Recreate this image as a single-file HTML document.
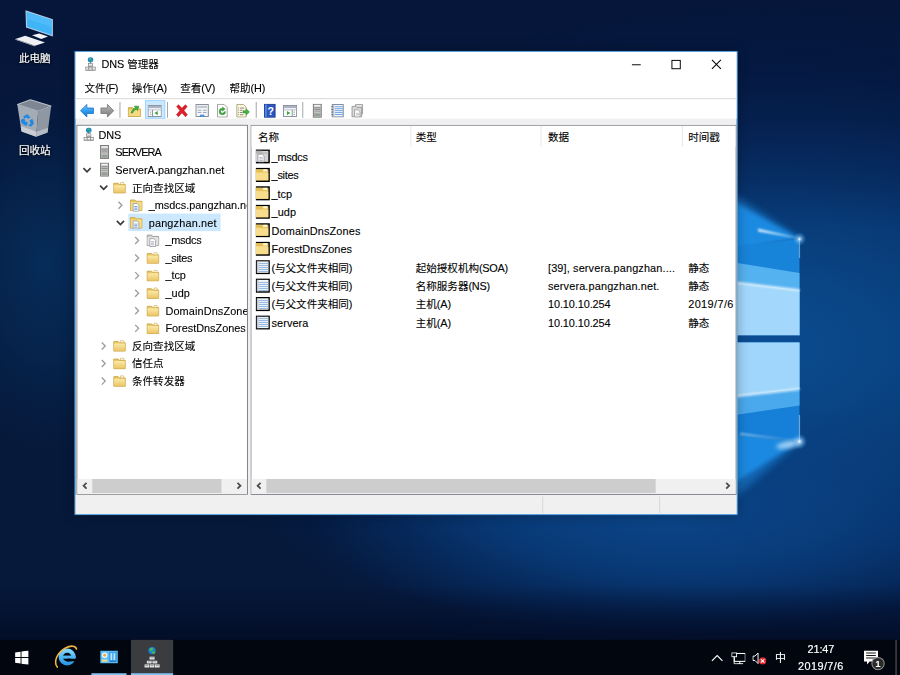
<!DOCTYPE html>
<html lang="zh-CN">
<head>
<meta charset="utf-8">
<title>DNS 管理器</title>
<style>
*{box-sizing:border-box;margin:0;padding:0}
html,body{width:900px;height:675px;overflow:hidden;background:#04183a}
body{font-family:"Liberation Sans","Noto Sans CJK SC",sans-serif;font-size:12px;color:#000;position:relative}
.l{font-size:12.4px}
#wall{position:absolute;left:0;top:0;width:900px;height:675px;display:block}
/* UI is laid out in the original 1024x768 space and scaled to 900x675 */
#stage{position:absolute;left:0;top:0;width:1024px;height:768px;transform:scale(0.87890625);transform-origin:0 0}
.abs{position:absolute;display:block}
.dicon{-webkit-text-stroke:.2px #fff;position:absolute;width:77px;text-align:center;color:#fff;font-size:12px;line-height:14px;text-shadow:0 1px 2px rgba(0,0,0,.9),0 0 3px rgba(0,0,0,.7)}
#win{-webkit-text-stroke:.12px #000;position:absolute;left:85px;top:58px;width:753.500px;height:528px;background:#f0f0f0;border:1px solid #1a82d8;box-shadow:0 0 14px rgba(0,0,0,.35)}
#title{position:absolute;left:0;top:0;width:752px;height:30px;background:#fff}
#title .txt{position:absolute;left:29.500px;top:6px;font-size:12px;line-height:16px;white-space:nowrap}
#menu{position:absolute;left:0;top:30px;width:752px;height:24.500px;background:#fff}
#menu>i{position:absolute;left:0;top:22.800px;width:752px;height:1.700px;background:#c4c4c4}
#menu>span{position:absolute;top:3.500px;line-height:16px;white-space:nowrap}
#tool{position:absolute;left:0;top:54px;width:752px;height:21.500px;background:#fff}
#tool .sep{position:absolute;top:3px;width:1px;height:18px;background:#9a9a9a}
#tool .hot{position:absolute;top:1px;width:23px;height:21px;background:#cce8ff;border:1px solid #99d1ff}
.pane{position:absolute;background:#fff;border:1px solid #6f747c;overflow:hidden}
#tree{left:1px;top:83px;width:195px;height:421px}
#list{left:199px;top:83px;width:553px;height:421px}
#tree .lb{position:absolute;line-height:20px;white-space:nowrap}
#tree .sel{position:absolute;background:#cce8ff}
.hdr{position:absolute;left:0;top:0;width:551px;height:24px;background:#fff}
.hdr>span{position:absolute;top:4.700px;line-height:16px;white-space:nowrap}
.hdr i{position:absolute;top:0;width:1px;height:24px;background:#e5e5e5}
.lrow{position:absolute;left:0;width:551px;height:21px;line-height:21px;white-space:nowrap}
.lrow>span{position:absolute;top:0;white-space:nowrap}
.sb{position:absolute;height:17px;background:#f0f0f0}
.sb .th{position:absolute;top:0;height:15.500px;background:#cdcdcd}
#status{position:absolute;left:0;top:504px;width:752px;height:22px;background:#f0f0f0}
#status i{position:absolute;top:2px;width:1px;height:19px;background:#d4d4d4}
#task{position:absolute;left:0;top:728px;width:1024px;height:40px;background:#02070f}
#task .act{position:absolute;top:0;width:48px;height:40px;background:#3a3c40}
#task .ul{position:absolute;top:38px;height:2px;background:#84c4f2}
#task .tx{-webkit-text-stroke:.2px #fff;position:absolute;color:#fff;font-size:12px;line-height:14px;white-space:nowrap;text-align:center}
#task .sd{position:absolute;left:1019px;top:0;width:1px;height:40px;background:#6e6e6e}
</style>
</head>
<body>
<svg id="wall" viewBox="0 0 900 675">
<defs>
<linearGradient id="fg" x1="0" y1="0" x2="0" y2="1"><stop offset="0" stop-color="#fbeaa8"/><stop offset="1" stop-color="#ecc566"/></linearGradient>
<linearGradient id="gb" x1="0" y1="0" x2="0" y2="1"><stop offset="0" stop-color="#7fd0ff"/><stop offset=".5" stop-color="#2f9df0"/><stop offset="1" stop-color="#1572d0"/></linearGradient>
<linearGradient id="gf" x1="0" y1="0" x2="0" y2="1"><stop offset="0" stop-color="#c4c4c4"/><stop offset=".5" stop-color="#999"/><stop offset="1" stop-color="#7c7c7c"/></linearGradient>
<linearGradient id="ieg" x1="0" y1="0" x2="0" y2="1"><stop offset="0" stop-color="#7dd3fc"/><stop offset="1" stop-color="#2a9bea"/></linearGradient>
<radialGradient id="bg" cx="0" cy="0" r="1" gradientUnits="userSpaceOnUse" gradientTransform="translate(765 345) scale(600 345)">
<stop offset="0" stop-color="#0a4b8e"/><stop offset=".2" stop-color="#0a4585"/><stop offset=".4" stop-color="#083a76"/><stop offset=".6" stop-color="#062c62"/><stop offset=".8" stop-color="#041d47"/><stop offset="1" stop-color="#06193b"/>
</radialGradient>
<radialGradient id="glow3" cx="0" cy="0" r="1" gradientUnits="userSpaceOnUse" gradientTransform="translate(45 265) scale(110 190)">
<stop offset="0" stop-color="#06305f" stop-opacity=".85"/><stop offset=".5" stop-color="#062a56" stop-opacity=".6"/><stop offset="1" stop-color="#05224a" stop-opacity="0"/>
</radialGradient>
<radialGradient id="glow2" cx="0" cy="0" r="1" gradientUnits="userSpaceOnUse" gradientTransform="translate(670 515) scale(360 120)">
<stop offset="0" stop-color="#0b468a" stop-opacity=".95"/><stop offset=".45" stop-color="#0a4284" stop-opacity=".7"/><stop offset="1" stop-color="#0a3f80" stop-opacity="0"/>
</radialGradient>
<linearGradient id="dkt" x1="0" y1="0" x2="0" y2="1"><stop offset="0" stop-color="#05143a" stop-opacity=".55"/><stop offset=".5" stop-color="#05143a" stop-opacity=".4"/><stop offset="1" stop-color="#05143a" stop-opacity="0"/></linearGradient>
<linearGradient id="dk" x1="0" y1="0" x2="0" y2="1"><stop offset="0" stop-color="#020a22" stop-opacity="0"/><stop offset=".35" stop-color="#020a22" stop-opacity=".45"/><stop offset=".61" stop-color="#020a22" stop-opacity=".8"/><stop offset="1" stop-color="#020a22" stop-opacity=".8"/></linearGradient>
<linearGradient id="fanU" x1="0" y1="1" x2="0" y2="0"><stop offset="0" stop-color="#1a8ae2"/><stop offset=".55" stop-color="#157bd2" stop-opacity=".9"/><stop offset="1" stop-color="#0e5eb0" stop-opacity="0"/></linearGradient>
<linearGradient id="fanD" x1="0" y1="0" x2="0" y2="1"><stop offset="0" stop-color="#1a8ae2"/><stop offset=".5" stop-color="#157bd2" stop-opacity=".85"/><stop offset="1" stop-color="#0e5eb0" stop-opacity="0"/></linearGradient>
<radialGradient id="flare"><stop offset="0" stop-color="#fff" stop-opacity=".95"/><stop offset=".35" stop-color="#9fd6ff" stop-opacity=".5"/><stop offset="1" stop-color="#3aa0f0" stop-opacity="0"/></radialGradient>
<filter id="bl" x="-20%" y="-20%" width="140%" height="140%"><feGaussianBlur stdDeviation="1.2"/></filter>
<filter id="bl3" x="-30%" y="-30%" width="160%" height="160%"><feGaussianBlur stdDeviation="2"/></filter>
<filter id="bl4" x="-30%" y="-30%" width="160%" height="160%"><feGaussianBlur stdDeviation="3.5"/></filter>
</defs>
<rect width="900" height="675" fill="url(#bg)"/>
<rect width="900" height="675" fill="url(#glow2)"/>
<rect width="200" height="675" fill="url(#glow3)"/>
<rect y="585" width="900" height="90" fill="url(#dk)"/>
<rect width="900" height="230" fill="url(#dkt)"/>
<!-- light fans above / below the window-logo panes -->
<path d="M801 239L718 184V254z" fill="#1a88df" opacity=".55" filter="url(#bl4)"/>
<path d="M800 239L720 194V252z" fill="#1c8ce4" opacity=".95" filter="url(#bl3)"/>
<path d="M801 441L718 428V512z" fill="#1a88df" opacity=".5" filter="url(#bl4)"/>
<path d="M800 441L720 430V492z" fill="#1c8ce4" opacity=".95" filter="url(#bl3)"/>
<!-- upper pane -->
<path d="M725 248.500L799.500 239V335.500H725z" fill="#1784da"/>
<path d="M725 261L799.500 273V335.500H725z" fill="#55b2f0"/>
<path d="M725 281L799.500 290V335.500H725z" fill="#a3d8fc"/>
<path d="M725 280.300L799.500 289.300V291L725 282z" fill="#eaf6ff" filter="url(#bl)"/>
<!-- gap -->
<rect x="725" y="335.500" width="74.500" height="7" fill="#0c4c92"/>
<!-- lower pane -->
<path d="M725 342.500H799.500V441L725 432z" fill="#1680d8"/>
<path d="M725 342.500H799.500V405.500L725 416.500z" fill="#4aa9ec"/>
<path d="M725 342.500H799.500V389L725 397.500z" fill="#a0d6fb"/>
<path d="M725 396.700L799.500 388.200V390L725 398.500z" fill="#eef8ff" filter="url(#bl)"/>
<!-- edge streaks + flares -->
<path d="M799.500 238V258" stroke="#cfeaff" stroke-width="1.200" opacity=".45"/>
<path d="M799.500 415V442" stroke="#cfeaff" stroke-width="1.200" opacity=".5"/>
<path d="M800 238.500L758 228.500 758 231.500z" fill="#d9efff" opacity=".95" filter="url(#bl)"/>
<path d="M800 441.500L740 433 740 434.500z" fill="#d9efff" opacity=".8" filter="url(#bl)"/>
<ellipse cx="789" cy="444.500" rx="13" ry="3.500" fill="#d8eeff" opacity=".7" filter="url(#bl3)" transform="rotate(-12 789 444.500)"/>
<circle cx="799.500" cy="239" r="7" fill="url(#flare)"/>
<circle cx="799.500" cy="441.500" r="8" fill="url(#flare)"/>
<g><path d="M25.500 10.200L52.900 19.200V36.500L26 27.600z" fill="#b9cfe6"/><path d="M26.600 11.800L51.900 20.100V35L27 26.800z" fill="#3fb4f6"/><path d="M26.600 11.800L51.900 20.100V27L26.800 19z" fill="#5cc3fb" opacity=".55"/><path d="M32 35.200L39.200 33.600 48 36.400 41.300 38.900z" fill="#f2f4f7"/><path d="M15.400 38.900L25.200 35.700 45 42.500 35 45.700z" fill="#eef0f4"/><path d="M15.400 38.900L35 45.700v.900L15.400 39.800z" fill="#b8bec8"/></g><g><path d="M17.300 104.500L30.400 99.700 51.200 106.100 38.200 111.300z" fill="#7d8793" stroke="#c9d0d8" stroke-width=".9"/><path d="M17.300 104.500L38.200 111.300 36.200 136.700 21.500 131.600z" fill="#a3abb5"/><path d="M38.200 111.300L51.200 106.100 47.600 132.500 36.200 136.700z" fill="#8e97a2"/><path d="M20.700 126L36.600 131.700 36.200 136.700 21.500 131.600z" fill="#d3d7dc" opacity=".8"/><path d="M36.600 131.700L48.200 127.700 47.600 132.500 36.200 136.700z" fill="#c0c5cc" opacity=".8"/><g fill="#1e88e5"><path d="M23.300 116.200l4-1.900 3.200 3.300-2.900 1.100-1.200-1.500-2 1.600z"/><path d="M32.300 118.700l1.700 4.600-2.700 3.200-3.600-1 2.900-1.800-1-3.300z"/><path d="M21.400 119.500l2.800-.900 1.300 3.200 2.500 1-1.700 3.200-3.700-1.900-2-3z"/></g></g>
</svg>

<div id="stage">
<div class="dicon" style="left:1px;top:59.500px">此电脑</div>
<div class="dicon" style="left:1px;top:163.500px">回收站</div>
<div id="win"><div id="title"><svg class="abs" style="left:9px;top:6.3px;" width="16" height="16" viewBox="0 0 16 16"><circle cx="8" cy="3.100" r="3.150" fill="#1f86cc"/><path d="M6.400 1.500q1.500-.900 2.500.200l-.600 1.200-1.400.400zM8.200 3.800l1.500-.300.400 1.100-1.300.900z" fill="#52c24c"/><rect x="7.500" y="5.600" width="1" height="1.800" fill="#777"/><rect x="5.600" y="7.200" width="4.800" height="3.300" fill="#f6f6f6" stroke="#808080" stroke-width=".8"/><path d="M6.500 9.300h3" stroke="#999" stroke-width=".7"/><rect x="2.600" y="11.300" width="3.500" height="3.700" fill="#f6f6f6" stroke="#808080" stroke-width=".8"/><rect x="6.250" y="11.300" width="3.500" height="3.700" fill="#f6f6f6" stroke="#808080" stroke-width=".8"/><rect x="9.900" y="11.300" width="3.500" height="3.700" fill="#f6f6f6" stroke="#808080" stroke-width=".8"/><path d="M3.300 13.800h2.100M6.950 13.800h2.100M10.600 13.800h2.100" stroke="#999" stroke-width=".7"/></svg><span class="txt"><span class="l" style="letter-spacing:-0.117px">DNS </span>管理器</span><svg class="abs" style="left:614px;top:0" width="138" height="30" viewBox="0 0 138 30"><path d="M19 14.700h10" stroke="#000" stroke-width="1.100"/><rect x="64.500" y="9.700" width="9.500" height="9.500" fill="none" stroke="#000" stroke-width="1.100"/><path d="M110 9.200l10.200 10.200M120.200 9.200l-10.200 10.200" stroke="#000" stroke-width="1.150"/></svg></div><div id="menu"><span style="left:10px">文件<span class="l" style="letter-spacing:-0.572px">(F)</span></span><span style="left:64px">操作<span class="l" style="letter-spacing:-0.127px">(A)</span></span><span style="left:119px">查看<span class="l" style="letter-spacing:-0.221px">(V)</span></span><span style="left:175px">帮助<span class="l" style="letter-spacing:-0.075px">(H)</span></span><i></i></div><div id="tool"><div class="hot" style="left:79px"></div><svg class="abs" style="left:5px;top:4.5px;" width="16" height="16" viewBox="0 0 16 16"><path d="M.600 8l7.200-7.200v4.100h7.500v6.200h-7.500v4.100z" fill="url(#gb)" stroke="#1a6dc4" stroke-width=".9" stroke-linejoin="round"/></svg><svg class="abs" style="left:28px;top:4.5px;" width="16" height="16" viewBox="0 0 16 16"><path d="M15.400 8l-7.200-7.200v4.100h-7.500v6.200h7.500v4.100z" fill="url(#gf)" stroke="#707070" stroke-width=".9" stroke-linejoin="round"/></svg><svg class="abs" style="left:59px;top:4.5px;" width="16" height="16" viewBox="0 0 16 16"><path d="M1 4.500h5l1.300 1.500h7.700v8.500h-14z" fill="#e8c560" stroke="#c59d3a" stroke-width=".9"/><path d="M1.500 7h13v7h-13z" fill="#f6da83"/><path d="M4 10.500c1-3 2.500-5 5-6l-1.300-1.800 5.300.300-1.500 5-1.200-1.700c-2 .700-3.300 2-4.300 4.200z" fill="#3fae3a" stroke="#2a7f27" stroke-width=".5"/></svg><svg class="abs" style="left:82px;top:4.5px;" width="16" height="16" viewBox="0 0 16 16"><rect x=".500" y="2" width="15" height="12.500" fill="#fff" stroke="#7b8794" stroke-width="1"/><rect x="1" y="2.500" width="14" height="2.600" fill="#a9b4c0"/><path d="M1 7h14" stroke="#9aa5b0" stroke-width=".8"/><path d="M5.500 7v7.500" stroke="#7b8794" stroke-width="1"/><path d="M11.500 8.200v5l-3.800-2.500z" fill="#3aa83a"/><rect x="2.500" y="9" width="1.500" height="1.200" fill="#8c97a2"/><rect x="2.500" y="11.500" width="1.500" height="1.200" fill="#8c97a2"/></svg><svg class="abs" style="left:113px;top:4.5px;" width="16" height="16" viewBox="0 0 16 16"><path d="M2 3.200l2.200-2 3.800 4 3.800-4 2.200 2-3.700 4.600 3.900 4.800-2.300 2.100-3.900-4.300-3.900 4.300-2.300-2.100 3.900-4.800z" fill="#e0202a" stroke="#b0121b" stroke-width=".6"/></svg><svg class="abs" style="left:136px;top:4.5px;" width="16" height="16" viewBox="0 0 16 16"><rect x="1" y="1" width="14" height="13.500" fill="#f4f4f4" stroke="#76808c" stroke-width="1"/><rect x="2.500" y="2.500" width="11" height="2.500" fill="#c3cad3"/><path d="M3 7.500h4M9 7.500h4M3 10h4M9 10h4" stroke="#8fa2b8" stroke-width="1"/><rect x="5.500" y="12.500" width="5" height="2.500" fill="#4a8fdd"/></svg><svg class="abs" style="left:159px;top:4.5px;" width="16" height="16" viewBox="0 0 16 16"><path d="M2.500 .800h7.500l3.500 3.500v10.900h-11z" fill="#fff" stroke="#8a8a8a" stroke-width=".9"/><path d="M8 5.200a3.700 3.700 0 1 0 3.700 3.900h-1.800a1.900 1.900 0 1 1-1.900-2.100v1.600l3.300-2.500-3.300-2.500z" fill="#3aa83a" stroke="#2a7f27" stroke-width=".4"/></svg><svg class="abs" style="left:182px;top:4.5px;" width="16" height="16" viewBox="0 0 16 16"><path d="M1.500 .800h7.500l3 3v11.400h-10.500z" fill="#fffbe0" stroke="#9a8f6a" stroke-width=".9"/><path d="M3 5h1M5 5h5M3 7.500h1M5 7.500h3M3 10h1M5 10h3M3 12.500h1M5 12.500h4" stroke="#7a7a7a" stroke-width="1"/><path d="M8.500 8h3.500v-2.300l4 3.600-4 3.600v-2.300h-3.500z" fill="#43b23f" stroke="#2a7f27" stroke-width=".5"/></svg><svg class="abs" style="left:213px;top:4.5px;" width="16" height="16" viewBox="0 0 16 16"><rect x="2" y=".500" width="12" height="15" fill="#2a56c0" stroke="#1a3a94" stroke-width="1"/><rect x="2.500" y="1" width="2" height="14" fill="#5b86e0"/><text x="9" y="12.500" font-family="Liberation Sans,sans-serif" font-weight="bold" font-size="12" fill="#fff" text-anchor="middle">?</text></svg><svg class="abs" style="left:236px;top:4.5px;" width="16" height="16" viewBox="0 0 16 16"><rect x=".500" y="2" width="15" height="12.500" fill="#fff" stroke="#7b8794" stroke-width="1"/><rect x="1" y="2.500" width="14" height="2.600" fill="#a9b4c0"/><path d="M1 7h14" stroke="#9aa5b0" stroke-width=".8"/><path d="M10.500 7v7.500" stroke="#7b8794" stroke-width="1"/><path d="M4.500 8.200v5l3.800-2.500z" fill="#3aa83a"/><rect x="12" y="9" width="1.500" height="1.200" fill="#8c97a2"/><rect x="12" y="11.500" width="1.500" height="1.200" fill="#8c97a2"/></svg><svg class="abs" style="left:267px;top:4.5px;" width="16" height="16" viewBox="0 0 16 16"><rect x="3.5" y=".5" width="9" height="15" fill="#c9c9c9" stroke="#6e6e6e"/><rect x="4.5" y="1.5" width="7" height="1.6" fill="#f2f2f2"/><rect x="4.5" y="4" width="7" height="1.3" fill="#8c8c8c"/><rect x="4.5" y="6.2" width="7" height="1.3" fill="#8c8c8c"/><rect x="4.5" y="8.4" width="7" height="1.3" fill="#a8a8a8"/><rect x="4.5" y="11" width="7" height="3.5" fill="#9a9a9a"/><rect x="9" y="12" width="1.6" height="1.2" fill="#5fd25f"/></svg><svg class="abs" style="left:290px;top:4.5px;" width="16" height="16" viewBox="0 0 16 16"><rect x="2" y="1" width="12.500" height="14" fill="#f5f9ff" stroke="#6f7d90" stroke-width="1"/><rect x="2.500" y="1.500" width="2" height="13" fill="#c3c9d3"/><path d="M5 3.500h9M5 5.700h9M5 7.900h9M5 10.100h9M5 12.300h9" stroke="#6ea0dd" stroke-width="1.100"/><path d="M.800 3.500h2.500M.800 6.500h2.500M.800 9.500h2.500M.800 12.500h2.500" stroke="#555" stroke-width=".8"/></svg><svg class="abs" style="left:313px;top:4.5px;" width="16" height="16" viewBox="0 0 16 16"><path d="M5.500 1h8v10.500h-8z" fill="#e3e3e3" stroke="#8e8e8e" stroke-width=".9"/><path d="M1.500 3h4.500l1.200 1.300h5.300v10.700h-11z" fill="#d7d7d7" stroke="#8e8e8e" stroke-width=".9"/><path d="M4.500 7h4l2 2v6h-6z" fill="#fff" stroke="#8c8c8c" stroke-width=".8"/><path d="M6 11.500q1.500-1.500 3 0t-3 1.500" fill="none" stroke="#a0a0a0" stroke-width=".8"/></svg><i class="sep" style="left:50px"></i><i class="sep" style="left:104px"></i><i class="sep" style="left:205px"></i><i class="sep" style="left:258px"></i></div><div class="pane" id="tree"><svg class="abs" style="left:4.5px;top:2px;" width="16" height="16" viewBox="0 0 16 16"><circle cx="8" cy="3.100" r="3.150" fill="#1f86cc"/><path d="M6.400 1.500q1.500-.900 2.500.200l-.600 1.200-1.400.400zM8.200 3.800l1.500-.300.400 1.100-1.300.900z" fill="#52c24c"/><rect x="7.500" y="5.600" width="1" height="1.800" fill="#777"/><rect x="5.600" y="7.200" width="4.800" height="3.300" fill="#f6f6f6" stroke="#808080" stroke-width=".8"/><path d="M6.500 9.300h3" stroke="#999" stroke-width=".7"/><rect x="2.600" y="11.300" width="3.500" height="3.700" fill="#f6f6f6" stroke="#808080" stroke-width=".8"/><rect x="6.250" y="11.300" width="3.500" height="3.700" fill="#f6f6f6" stroke="#808080" stroke-width=".8"/><rect x="9.900" y="11.300" width="3.500" height="3.700" fill="#f6f6f6" stroke="#808080" stroke-width=".8"/><path d="M3.300 13.800h2.100M6.950 13.800h2.100M10.600 13.800h2.100" stroke="#999" stroke-width=".7"/></svg><span class="lb" style="left:24.2px;top:1px"><span class="l" style="letter-spacing:-0.189px">DNS</span></span><svg class="abs" style="left:23px;top:22px;" width="16" height="16" viewBox="0 0 16 16"><rect x="3.5" y=".5" width="9" height="15" fill="#c9c9c9" stroke="#6e6e6e"/><rect x="4.5" y="1.5" width="7" height="1.6" fill="#f2f2f2"/><rect x="4.5" y="4" width="7" height="1.3" fill="#8c8c8c"/><rect x="4.5" y="6.2" width="7" height="1.3" fill="#8c8c8c"/><rect x="4.5" y="8.4" width="7" height="1.3" fill="#a8a8a8"/><rect x="4.5" y="11" width="7" height="3.5" fill="#9a9a9a"/><rect x="9" y="12" width="1.6" height="1.2" fill="#5fd25f"/></svg><span class="lb" style="left:43.2px;top:21px"><span class="l" style="letter-spacing:-1.026px">SERVERA</span></span><svg class="abs" style="left:3px;top:42px;" width="16" height="16" viewBox="0 0 16 16"><path d="M3.900 6.300l4.100 4.100 4.100-4.100" fill="none" stroke="#3a3a3a" stroke-width="1.900"/></svg><svg class="abs" style="left:23px;top:42px;" width="16" height="16" viewBox="0 0 16 16"><rect x="3.5" y=".5" width="9" height="15" fill="#c9c9c9" stroke="#6e6e6e"/><rect x="4.5" y="1.5" width="7" height="1.6" fill="#f2f2f2"/><rect x="4.5" y="4" width="7" height="1.3" fill="#8c8c8c"/><rect x="4.5" y="6.2" width="7" height="1.3" fill="#8c8c8c"/><rect x="4.5" y="8.4" width="7" height="1.3" fill="#a8a8a8"/><rect x="4.5" y="11" width="7" height="3.5" fill="#9a9a9a"/><rect x="9" y="12" width="1.6" height="1.2" fill="#5fd25f"/></svg><span class="lb" style="left:43.2px;top:41px"><span class="l" style="letter-spacing:0.039px">ServerA.pangzhan.net</span></span><svg class="abs" style="left:22px;top:62px;" width="16" height="16" viewBox="0 0 16 16"><path d="M3.900 6.300l4.100 4.100 4.100-4.100" fill="none" stroke="#3a3a3a" stroke-width="1.900"/></svg><svg class="abs" style="left:40px;top:62px;" width="16" height="16" viewBox="0 0 16 16"><path d="M1.500 3.500h5l1.300 1.500h6.700v9.500h-13z" fill="#e9c763" stroke="#c9a13c" stroke-width=".9"/><path d="M1.900 5.800h12.200v8.300h-12.200z" fill="url(#fg)"/><path d="M9.200 2.600h3.600v2.400h-3.600z" fill="#fffbe8" stroke="#c9a13c" stroke-width=".6"/></svg><span class="lb" style="left:62.2px;top:61px">正向查找区域</span><svg class="abs" style="left:41px;top:82px;" width="16" height="16" viewBox="0 0 16 16"><path d="M5.800 4.600l3.900 4-3.900 4" fill="none" stroke="#9c9c9c" stroke-width="1.500"/></svg><svg class="abs" style="left:59px;top:82px;" width="16" height="16" viewBox="0 0 16 16"><path d="M1.5 2.5h5l1.3 1.5h6.7v10.500h-13z" fill="#e9c763" stroke="#c9a13c" stroke-width=".9"/><path d="M1.9 4.8h12.2v9.3h-12.2z" fill="#f7dc86"/><path d="M4.5 6.5h4.5l2 2v7h-6.500z" fill="#fff" stroke="#7d8ea6" stroke-width=".8"/><path d="M5.8 10h3.600M5.8 11.800h3.600M5.800 13.600h3.600" stroke="#3a77c9" stroke-width=".8"/></svg><span class="lb" style="left:81.2px;top:81px"><span class="l" style="letter-spacing:-0.001px">_msdcs.pangzhan.net</span></span><div class="sel" style="left:58px;top:100px;width:105px;height:20px"></div><svg class="abs" style="left:41px;top:102px;" width="16" height="16" viewBox="0 0 16 16"><path d="M3.900 6.300l4.100 4.100 4.100-4.100" fill="none" stroke="#3a3a3a" stroke-width="1.900"/></svg><svg class="abs" style="left:59px;top:102px;" width="16" height="16" viewBox="0 0 16 16"><path d="M1.5 2.5h5l1.3 1.5h6.7v10.500h-13z" fill="#e9c763" stroke="#c9a13c" stroke-width=".9"/><path d="M1.9 4.8h12.2v9.3h-12.2z" fill="#f7dc86"/><path d="M4.5 6.5h4.5l2 2v7h-6.500z" fill="#fff" stroke="#7d8ea6" stroke-width=".8"/><path d="M5.8 10h3.600M5.8 11.800h3.600M5.800 13.600h3.600" stroke="#3a77c9" stroke-width=".8"/></svg><span class="lb" style="left:81.2px;top:101px"><span class="l" style="letter-spacing:0.190px">pangzhan.net</span></span><svg class="abs" style="left:60px;top:122px;" width="16" height="16" viewBox="0 0 16 16"><path d="M5.800 4.600l3.900 4-3.900 4" fill="none" stroke="#9c9c9c" stroke-width="1.500"/></svg><svg class="abs" style="left:78px;top:122px;" width="16" height="16" viewBox="0 0 16 16"><path d="M1.5 2.5h5l1.3 1.5h6.7v10.500h-13z" fill="#cfcfcf" stroke="#8e8e8e" stroke-width=".9"/><path d="M1.9 4.8h12.2v9.3h-12.2z" fill="#e4e4e4"/><path d="M4.5 6.5h4.5l2 2v7h-6.500z" fill="#fff" stroke="#8c8c8c" stroke-width=".8"/><path d="M5.8 10h3.600M5.8 11.800h3.600M5.800 13.600h3.600" stroke="#8f9bb0" stroke-width=".8"/></svg><span class="lb" style="left:100.2px;top:121px"><span class="l" style="letter-spacing:-0.275px">_msdcs</span></span><svg class="abs" style="left:60px;top:142px;" width="16" height="16" viewBox="0 0 16 16"><path d="M5.800 4.600l3.900 4-3.900 4" fill="none" stroke="#9c9c9c" stroke-width="1.500"/></svg><svg class="abs" style="left:78px;top:142px;" width="16" height="16" viewBox="0 0 16 16"><path d="M1.500 3.500h5l1.300 1.500h6.700v9.500h-13z" fill="#e9c763" stroke="#c9a13c" stroke-width=".9"/><path d="M1.900 5.800h12.200v8.300h-12.200z" fill="url(#fg)"/><path d="M9.200 2.600h3.600v2.400h-3.600z" fill="#fffbe8" stroke="#c9a13c" stroke-width=".6"/></svg><span class="lb" style="left:100.2px;top:141px"><span class="l" style="letter-spacing:-0.293px">_sites</span></span><svg class="abs" style="left:60px;top:162px;" width="16" height="16" viewBox="0 0 16 16"><path d="M5.800 4.600l3.900 4-3.900 4" fill="none" stroke="#9c9c9c" stroke-width="1.500"/></svg><svg class="abs" style="left:78px;top:162px;" width="16" height="16" viewBox="0 0 16 16"><path d="M1.500 3.500h5l1.300 1.500h6.700v9.500h-13z" fill="#e9c763" stroke="#c9a13c" stroke-width=".9"/><path d="M1.900 5.800h12.200v8.300h-12.200z" fill="url(#fg)"/><path d="M9.200 2.600h3.600v2.400h-3.600z" fill="#fffbe8" stroke="#c9a13c" stroke-width=".6"/></svg><span class="lb" style="left:100.2px;top:161px"><span class="l" style="letter-spacing:-0.026px">_tcp</span></span><svg class="abs" style="left:60px;top:182px;" width="16" height="16" viewBox="0 0 16 16"><path d="M5.800 4.600l3.900 4-3.900 4" fill="none" stroke="#9c9c9c" stroke-width="1.500"/></svg><svg class="abs" style="left:78px;top:182px;" width="16" height="16" viewBox="0 0 16 16"><path d="M1.500 3.500h5l1.300 1.500h6.700v9.500h-13z" fill="#e9c763" stroke="#c9a13c" stroke-width=".9"/><path d="M1.900 5.800h12.200v8.300h-12.200z" fill="url(#fg)"/><path d="M9.200 2.600h3.600v2.400h-3.600z" fill="#fffbe8" stroke="#c9a13c" stroke-width=".6"/></svg><span class="lb" style="left:100.2px;top:181px"><span class="l" style="letter-spacing:0.078px">_udp</span></span><svg class="abs" style="left:60px;top:202px;" width="16" height="16" viewBox="0 0 16 16"><path d="M5.800 4.600l3.900 4-3.900 4" fill="none" stroke="#9c9c9c" stroke-width="1.500"/></svg><svg class="abs" style="left:78px;top:202px;" width="16" height="16" viewBox="0 0 16 16"><path d="M1.500 3.500h5l1.300 1.500h6.700v9.500h-13z" fill="#e9c763" stroke="#c9a13c" stroke-width=".9"/><path d="M1.900 5.800h12.200v8.300h-12.200z" fill="url(#fg)"/><path d="M9.200 2.600h3.600v2.400h-3.600z" fill="#fffbe8" stroke="#c9a13c" stroke-width=".6"/></svg><span class="lb" style="left:100.2px;top:201px"><span class="l" style="letter-spacing:0.139px">DomainDnsZones</span></span><svg class="abs" style="left:60px;top:222px;" width="16" height="16" viewBox="0 0 16 16"><path d="M5.800 4.600l3.900 4-3.900 4" fill="none" stroke="#9c9c9c" stroke-width="1.500"/></svg><svg class="abs" style="left:78px;top:222px;" width="16" height="16" viewBox="0 0 16 16"><path d="M1.500 3.500h5l1.300 1.500h6.700v9.500h-13z" fill="#e9c763" stroke="#c9a13c" stroke-width=".9"/><path d="M1.900 5.800h12.200v8.300h-12.200z" fill="url(#fg)"/><path d="M9.200 2.600h3.600v2.400h-3.600z" fill="#fffbe8" stroke="#c9a13c" stroke-width=".6"/></svg><span class="lb" style="left:100.2px;top:221px"><span class="l" style="letter-spacing:-0.017px">ForestDnsZones</span></span><svg class="abs" style="left:22px;top:242px;" width="16" height="16" viewBox="0 0 16 16"><path d="M5.800 4.600l3.900 4-3.900 4" fill="none" stroke="#9c9c9c" stroke-width="1.500"/></svg><svg class="abs" style="left:40px;top:242px;" width="16" height="16" viewBox="0 0 16 16"><path d="M1.500 3.500h5l1.300 1.500h6.700v9.500h-13z" fill="#e9c763" stroke="#c9a13c" stroke-width=".9"/><path d="M1.900 5.800h12.200v8.300h-12.200z" fill="url(#fg)"/><path d="M9.200 2.600h3.600v2.400h-3.600z" fill="#fffbe8" stroke="#c9a13c" stroke-width=".6"/></svg><span class="lb" style="left:62.2px;top:241px">反向查找区域</span><svg class="abs" style="left:22px;top:262px;" width="16" height="16" viewBox="0 0 16 16"><path d="M5.800 4.600l3.900 4-3.900 4" fill="none" stroke="#9c9c9c" stroke-width="1.500"/></svg><svg class="abs" style="left:40px;top:262px;" width="16" height="16" viewBox="0 0 16 16"><path d="M1.500 3.500h5l1.300 1.500h6.700v9.500h-13z" fill="#e9c763" stroke="#c9a13c" stroke-width=".9"/><path d="M1.900 5.800h12.200v8.300h-12.200z" fill="url(#fg)"/><path d="M9.200 2.600h3.600v2.400h-3.600z" fill="#fffbe8" stroke="#c9a13c" stroke-width=".6"/></svg><span class="lb" style="left:62.2px;top:261px">信任点</span><svg class="abs" style="left:22px;top:282px;" width="16" height="16" viewBox="0 0 16 16"><path d="M5.800 4.600l3.900 4-3.900 4" fill="none" stroke="#9c9c9c" stroke-width="1.500"/></svg><svg class="abs" style="left:40px;top:282px;" width="16" height="16" viewBox="0 0 16 16"><path d="M1.500 3.500h5l1.300 1.500h6.700v9.500h-13z" fill="#e9c763" stroke="#c9a13c" stroke-width=".9"/><path d="M1.900 5.800h12.200v8.300h-12.200z" fill="url(#fg)"/><path d="M9.200 2.600h3.600v2.400h-3.600z" fill="#fffbe8" stroke="#c9a13c" stroke-width=".6"/></svg><span class="lb" style="left:62.2px;top:281px">条件转发器</span><div class="sb" style="left:0;top:402px;width:193px"><div class="th" style="left:17px;width:147px"></div><svg class="abs" style="left:0;top:0" width="17" height="17" viewBox="0 0 17 17"><path d="M10.500 4.300l-3.400 3.300 3.400 3.300" fill="none" stroke="#4a4a4a" stroke-width="2"/></svg><svg class="abs" style="left:176px;top:0" width="17" height="17" viewBox="0 0 17 17"><path d="M6.200 4.300l3.400 3.300-3.400 3.300" fill="none" stroke="#4a4a4a" stroke-width="2"/></svg></div></div><div class="pane" id="list"><div class="hdr"><span style="left:7.500px">名称</span><span style="left:187px">类型</span><span style="left:337.500px">数据</span><span style="left:497px">时间戳</span><i style="left:181px"></i><i style="left:329px"></i><i style="left:490px"></i></div><div class="lrow" style="top:26px"><svg class="abs" style="left:5px;top:0.7px;" width="16" height="16" viewBox="0 0 16 16"><rect x="-.300" y="-.300" width="16.600" height="16.600" fill="#000"/><rect x="0" y="1.600" width="14.300" height="12.600" fill="#d4d4d4"/><path d="M0 1.600h6.500l1.500 2h6.300v1.400h-14.300z" fill="#b4b4b4"/><path d="M2.500 5.500h5l2 2v6.700h-7z" fill="#fff" stroke="#8a8a8a" stroke-width=".8"/><path d="M4 9h4M4 10.800h4M4 12.600h4" stroke="#8f9bb0" stroke-width=".8"/></svg><span style="left:23px"><span class="l" style="letter-spacing:-0.275px">_msdcs</span></span></div><div class="lrow" style="top:47px"><svg class="abs" style="left:5px;top:0.7px;" width="16" height="16" viewBox="0 0 16 16"><rect x="-.300" y="-.300" width="16.600" height="16.600" fill="#000"/><rect x="0" y="1.600" width="14.300" height="12.600" fill="#f4d67c"/><path d="M0 1.600h6.500l1.500 2h6.300v1.400h-14.300z" fill="#e3bf58"/><path d="M8.500 1.600h4.300v2.600h-4.300z" fill="#fff6d5"/><rect x="0" y="6" width="14.300" height="8.200" fill="#f7dd8c"/></svg><span style="left:23px"><span class="l" style="letter-spacing:-0.293px">_sites</span></span></div><div class="lrow" style="top:68px"><svg class="abs" style="left:5px;top:0.7px;" width="16" height="16" viewBox="0 0 16 16"><rect x="-.300" y="-.300" width="16.600" height="16.600" fill="#000"/><rect x="0" y="1.600" width="14.300" height="12.600" fill="#f4d67c"/><path d="M0 1.600h6.500l1.500 2h6.300v1.400h-14.300z" fill="#e3bf58"/><path d="M8.500 1.600h4.300v2.600h-4.300z" fill="#fff6d5"/><rect x="0" y="6" width="14.300" height="8.200" fill="#f7dd8c"/></svg><span style="left:23px"><span class="l" style="letter-spacing:-0.026px">_tcp</span></span></div><div class="lrow" style="top:89px"><svg class="abs" style="left:5px;top:0.7px;" width="16" height="16" viewBox="0 0 16 16"><rect x="-.300" y="-.300" width="16.600" height="16.600" fill="#000"/><rect x="0" y="1.600" width="14.300" height="12.600" fill="#f4d67c"/><path d="M0 1.600h6.500l1.500 2h6.300v1.400h-14.300z" fill="#e3bf58"/><path d="M8.500 1.600h4.300v2.600h-4.300z" fill="#fff6d5"/><rect x="0" y="6" width="14.300" height="8.200" fill="#f7dd8c"/></svg><span style="left:23px"><span class="l" style="letter-spacing:0.078px">_udp</span></span></div><div class="lrow" style="top:110px"><svg class="abs" style="left:5px;top:0.7px;" width="16" height="16" viewBox="0 0 16 16"><rect x="-.300" y="-.300" width="16.600" height="16.600" fill="#000"/><rect x="0" y="1.600" width="14.300" height="12.600" fill="#f4d67c"/><path d="M0 1.600h6.500l1.500 2h6.300v1.400h-14.300z" fill="#e3bf58"/><path d="M8.500 1.600h4.300v2.600h-4.300z" fill="#fff6d5"/><rect x="0" y="6" width="14.300" height="8.200" fill="#f7dd8c"/></svg><span style="left:23px"><span class="l" style="letter-spacing:0.139px">DomainDnsZones</span></span></div><div class="lrow" style="top:131px"><svg class="abs" style="left:5px;top:0.7px;" width="16" height="16" viewBox="0 0 16 16"><rect x="-.300" y="-.300" width="16.600" height="16.600" fill="#000"/><rect x="0" y="1.600" width="14.300" height="12.600" fill="#f4d67c"/><path d="M0 1.600h6.500l1.500 2h6.300v1.400h-14.300z" fill="#e3bf58"/><path d="M8.500 1.600h4.300v2.600h-4.300z" fill="#fff6d5"/><rect x="0" y="6" width="14.300" height="8.200" fill="#f7dd8c"/></svg><span style="left:23px"><span class="l" style="letter-spacing:-0.017px">ForestDnsZones</span></span></div><div class="lrow" style="top:152px"><svg class="abs" style="left:5px;top:0.7px;" width="16" height="16" viewBox="0 0 16 16"><rect x="-.300" y="-.300" width="16.600" height="16.600" fill="#000"/><rect x="1.300" y="1.400" width="13.200" height="13" fill="#f7fafe"/><rect x="1.300" y="1.400" width="2" height="13" fill="#c3c8d0"/><path d="M3.600 3.667h10.900M3.600 5.942h10.900M3.600 8.218h10.900M3.600 10.493h10.900M3.600 12.769h10.900" stroke="#7fa6da" stroke-width="1"/></svg><span style="left:23px"><span class="l" style="letter-spacing:-0.226px">(</span>与父文件夹相同<span class="l" style="letter-spacing:-0.226px">)</span></span><span style="left:187px">起始授权机构<span class="l" style="letter-spacing:-0.335px">(SOA)</span></span><span style="left:337.500px"><span class="l" style="letter-spacing:0.161px">[39], servera.pangzhan....</span></span><span style="left:497px">静态</span></div><div class="lrow" style="top:173px"><svg class="abs" style="left:5px;top:0.7px;" width="16" height="16" viewBox="0 0 16 16"><rect x="-.300" y="-.300" width="16.600" height="16.600" fill="#000"/><rect x="1.300" y="1.400" width="13.200" height="13" fill="#f7fafe"/><rect x="1.300" y="1.400" width="2" height="13" fill="#c3c8d0"/><path d="M3.600 4.284h10.900M3.600 6.560h10.900M3.600 8.836h10.900M3.600 11.111h10.900M3.600 13.387h10.900" stroke="#7fa6da" stroke-width="1"/></svg><span style="left:23px"><span class="l" style="letter-spacing:-0.226px">(</span>与父文件夹相同<span class="l" style="letter-spacing:-0.226px">)</span></span><span style="left:187px">名称服务器<span class="l" style="letter-spacing:-0.284px">(NS)</span></span><span style="left:337.500px"><span class="l" style="letter-spacing:0.171px">servera.pangzhan.net.</span></span><span style="left:497px">静态</span></div><div class="lrow" style="top:194px"><svg class="abs" style="left:5px;top:0.7px;" width="16" height="16" viewBox="0 0 16 16"><rect x="-.300" y="-.300" width="16.600" height="16.600" fill="#000"/><rect x="1.300" y="1.400" width="13.200" height="13" fill="#f7fafe"/><rect x="1.300" y="1.400" width="2" height="13" fill="#c3c8d0"/><path d="M3.600 3.764h10.900M3.600 6.040h10.900M3.600 8.316h10.900M3.600 10.591h10.900M3.600 12.867h10.900" stroke="#7fa6da" stroke-width="1"/></svg><span style="left:23px"><span class="l" style="letter-spacing:-0.226px">(</span>与父文件夹相同<span class="l" style="letter-spacing:-0.226px">)</span></span><span style="left:187px">主机<span class="l" style="letter-spacing:-0.127px">(A)</span></span><span style="left:337.500px"><span class="l" style="letter-spacing:-0.103px">10.10.10.254</span></span><span style="left:497px"><span class="l" style="letter-spacing:0.455px">2019/7/6</span></span></div><div class="lrow" style="top:215px"><svg class="abs" style="left:5px;top:0.7px;" width="16" height="16" viewBox="0 0 16 16"><rect x="-.300" y="-.300" width="16.600" height="16.600" fill="#000"/><rect x="1.300" y="1.400" width="13.200" height="13" fill="#f7fafe"/><rect x="1.300" y="1.400" width="2" height="13" fill="#c3c8d0"/><path d="M3.600 3.244h10.900M3.600 5.520h10.900M3.600 7.796h10.900M3.600 10.071h10.900M3.600 12.347h10.900" stroke="#7fa6da" stroke-width="1"/></svg><span style="left:23px"><span class="l" style="letter-spacing:0.072px">servera</span></span><span style="left:187px">主机<span class="l" style="letter-spacing:-0.127px">(A)</span></span><span style="left:337.500px"><span class="l" style="letter-spacing:-0.103px">10.10.10.254</span></span><span style="left:497px">静态</span></div><div class="sb" style="left:0;top:402px;width:551px"><div class="th" style="left:17px;width:443px"></div><svg class="abs" style="left:0;top:0" width="17" height="17" viewBox="0 0 17 17"><path d="M10.500 4.300l-3.400 3.300 3.400 3.300" fill="none" stroke="#4a4a4a" stroke-width="2"/></svg><svg class="abs" style="left:534px;top:0" width="17" height="17" viewBox="0 0 17 17"><path d="M6.200 4.300l3.400 3.300-3.400 3.300" fill="none" stroke="#4a4a4a" stroke-width="2"/></svg></div></div><div id="status"><i style="left:531px"></i><i style="left:664px"></i></div></div>
<div id="task"><div class="act" style="left:149px"></div><div class="ul" style="left:104px;width:40px"></div><div class="ul" style="left:149px;width:48px"></div><svg class="abs" style="left:16px;top:11.5px;" width="16.5" height="16.5" viewBox="0 0 16 16"><path d="M1.200 2.300l6-.900v6h-6zM8.200 1.200l7.600-1.200v7.400h-7.600zM1.200 8.400h6v6l-6-.900zM8.200 8.400h7.600v7.600l-7.600-1.200z" fill="#fff"/></svg><svg class="abs" style="left:61.7px;top:5px;" width="28" height="28" viewBox="0 0 28 28"><circle cx="14.400" cy="14.600" r="7.300" fill="none" stroke="url(#ieg)" stroke-width="4.800"/><rect x="8" y="12.900" width="16" height="3.500" fill="#4fb6f3"/><path d="M14.400 16.400h11.600v2.600l-11.600 .800z" fill="#02070f"/><path d="M3.200 26C-1.500 20 3 9.500 12.500 4.300 18 1.300 24.500 1.300 25 5.500" fill="none" stroke="#f2b640" stroke-width="1.800" stroke-linecap="round"/></svg><svg class="abs" style="left:113.8px;top:12px;" width="20.5" height="15" viewBox="0 0 21 15"><rect x="0" y="0" width="21" height="15" fill="#5fc1f4"/><rect x="10.200" y="1.500" width="9.300" height="12" fill="#3a9fe6"/><circle cx="5.200" cy="5.500" r="3.200" fill="#f4f8fb"/><circle cx="5.200" cy="5.500" r="1.700" fill="#e8a93a"/><rect x="2" y="10.500" width="6.500" height="2.500" fill="#f0d98a"/><rect x="12" y="3" width="2" height="8" fill="#bfe4fb"/><rect x="15.500" y="3" width="2" height="8" fill="#bfe4fb"/><rect x="11.500" y="12" width="7" height="1" fill="#1f6fc0"/></svg><svg class="abs" style="left:164px;top:7.5px;" width="18" height="24" viewBox="0 0 18 24"><circle cx="9" cy="4.200" r="4.200" fill="#1b7fd0"/><path d="M6 2.500q2.500-2 4.500-.500l-1 2.200-2.700.600zM9 5.500l3-.500.500 2-2.500 1.500z" fill="#49c04a"/><rect x="6.200" y="11.200" width="5.600" height="3.200" fill="#f2f2f2"/><rect x="3.100" y="15.800" width="5.400" height="3" fill="#f2f2f2"/><rect x="9.500" y="15.800" width="5.400" height="3" fill="#f2f2f2"/><rect x=".400" y="20" width="5.300" height="3.400" fill="#f2f2f2"/><rect x="6.350" y="20" width="5.300" height="3.400" fill="#f2f2f2"/><rect x="12.300" y="20" width="5.300" height="3.400" fill="#f2f2f2"/><path d="M7 12.500h4M4 17h3.500M10.500 17h3.500M1.200 21.400h3.600M7.200 21.400h3.600M13.200 21.400h3.600" stroke="#555" stroke-width=".7"/></svg><svg class="abs" style="left:809px;top:15.5px;" width="14" height="9" viewBox="0 0 14 9"><path d="M1 8l6-6 6 6" fill="none" stroke="#fff" stroke-width="1.300"/></svg><svg class="abs" style="left:831.5px;top:13.5px;" width="16.5" height="14" viewBox="0 0 16.5 14"><rect x="3.500" y="1.500" width="12.500" height="9" fill="none" stroke="#fff" stroke-width="1.200"/><path d="M9.700 10.500v2.500M6.500 13.200h7" stroke="#fff" stroke-width="1.200"/><rect x=".600" y=".800" width="5.500" height="4.400" fill="#05080d" stroke="#fff" stroke-width="1"/><path d="M3.300 5.200v8h3.200" fill="none" stroke="#fff" stroke-width="1"/></svg><svg class="abs" style="left:855.8px;top:13.8px;" width="16" height="14.5" viewBox="0 0 16 14.5"><path d="M.700 4.500h2.300l3.500-3.500v12l-3.500-3.500h-2.300z" fill="none" stroke="#fff" stroke-width="1.100"/><circle cx="11.700" cy="10" r="4.200" fill="#e0262d"/><path d="M9.700 8l4 4M13.700 8l-4 4" stroke="#fff" stroke-width="1.200"/></svg><span class="tx" style="left:878px;top:14px;width:20px;font-size:12.500px">中</span><span class="tx" style="left:904px;top:4px;width:60px"><span class="l" style="letter-spacing:-0.067px">21:47</span></span><span class="tx" style="left:904px;top:23px;width:60px"><span class="l" style="letter-spacing:0.455px">2019/7/6</span></span><svg class="abs" style="left:983px;top:11.5px;" width="16" height="16" viewBox="0 0 16 16"><path d="M0 0h16v12.500h-9.500l-3 3.500v-3.500h-3.500z" fill="#fff"/><path d="M2.500 3h11M2.500 5.800h11M2.500 8.600h11" stroke="#1a1a1a" stroke-width="1.300"/></svg><svg class="abs" style="left:991px;top:19px" width="16" height="16" viewBox="0 0 16 16"><circle cx="8" cy="8" r="7" fill="#2a2a2a" stroke="#8e8e8e" stroke-width="1.200"/><text x="8" y="12" font-family="Liberation Sans,sans-serif" font-weight="bold" font-size="11" fill="#fff" text-anchor="middle">1</text></svg><i class="sd"></i></div>
</div>
</body>
</html>
